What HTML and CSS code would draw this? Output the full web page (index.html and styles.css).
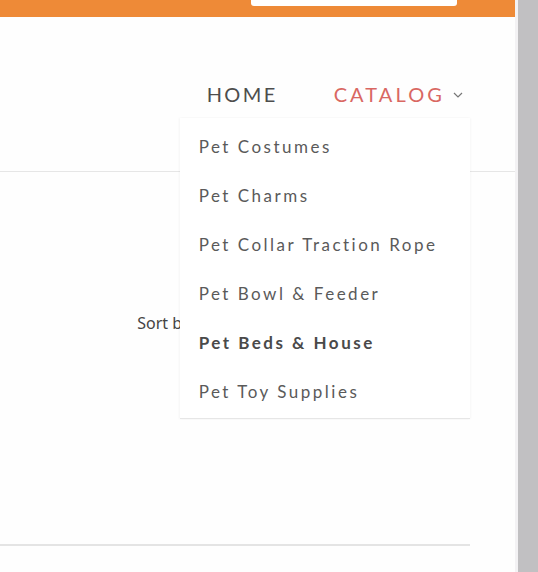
FILE: index.html
```html
<!DOCTYPE html>
<html lang="en">
<head>
  <meta charset="UTF-8" />
  <meta name="viewport" content="width=device-width, initial-scale=1.0"/>
  <title>Pet Shop</title>
  <link rel="stylesheet" href="styles.css">
</head>
<body>

  <div class="window">
    <div class="page">
      <div class="topbar">
        <div class="search"></div>
      </div>

      <nav class="nav">
        <a class="nav-link" href="#">HOME</a>
        <div class="nav-item">
          <a class="nav-link active" href="#">CATALOG
            <svg class="chevron" width="10" height="6" viewBox="0 0 10 6"><path d="M1 1 L5 5 L9 1" fill="none" stroke="#777" stroke-width="1.2"/></svg>
          </a>
          <ul class="dropdown">
            <li>Pet Costumes</li>
            <li>Pet Charms</li>
            <li>Pet Collar Traction Rope</li>
            <li>Pet Bowl &amp; Feeder</li>
            <li class="current">Pet Beds &amp; House</li>
            <li>Pet Toy Supplies</li>
          </ul>
        </div>
      </nav>

      <div class="toolbar">
        <span class="sort-label">Sort by</span>
        <div class="sort-select"></div>
      </div>

      <div class="grid-end"></div>
    </div>
    <div class="scrollbar"></div>
  </div>

</body>
</html>
```

FILE: styles.css
```css
* {
  box-sizing: border-box;
}

html, body {
  margin: 0;
  padding: 0;
  height: 100%;
  background: #fff;
  overflow: hidden;
}

.window {
  display: flex;
  height: 572px;
}

.page {
  flex: 1;
  display: flex;
  flex-direction: column;
  border-right: 3px solid #f3f2f4;
  background: #fefefe;
}

.scrollbar {
  width: 20px;
  background: #c1c0c2;
}

.topbar {
  height: 17px;
  background: #ee8a37;
  display: flex;
  justify-content: flex-end;
  padding-right: 58px;
}

.search {
  width: 206px;
  height: 6px;
  background: #fff;
  border-radius: 0 0 3px 3px;
}

.nav {
  display: flex;
  justify-content: flex-end;
  align-items: center;
  gap: 56px;
  padding: 0 52px 0 0;
  margin-top: 66px;
  height: 22px;
  font-family: "Lato", sans-serif;
}

.nav-item {
  position: relative;
}

.nav-link {
  font-size: 20px;
  letter-spacing: 2.4px;
  color: #4d4d4d;
  text-decoration: none;
  display: flex;
  align-items: center;
}

.nav-link.active {
  color: #d96762;
  letter-spacing: 3.1px;
}

.chevron {
  margin-left: 8px;
  margin-top: 2px;
}

.dropdown {
  position: absolute;
  top: 36px;
  left: -154px;
  width: 290px;
  margin: 0;
  padding: 4px 0 2px;
  list-style: none;
  background: #fff;
  border-bottom: 1px solid #e6e6e6;
  box-shadow: -1px 0 2px rgba(0, 0, 0, 0.04), 1px 0 2px rgba(0, 0, 0, 0.03);
  z-index: 5;
}

.dropdown li {
  height: 49px;
  line-height: 49px;
  padding-left: 19px;
  font-size: 17px;
  letter-spacing: 2.5px;
  color: #5a5a5a;
}

.dropdown li.current {
  font-weight: bold;
  color: #4a4a4a;
}

.toolbar {
  margin-top: 66px;
  border-top: 1px solid #e6e6e6;
  display: flex;
  justify-content: flex-end;
  align-items: center;
  padding: 123px 46px 0 0;
  gap: 3px;
}

.sort-label {
  font-family: "Noto Sans", sans-serif;
  font-size: 16px;
  color: #444;
}

.sort-select {
  width: 276px;
  height: 56px;
  border-right: 1px solid #cfcfcf;
}

.grid-end {
  margin-top: 193px;
  width: 470px;
  border-top: 2px solid #e4e4e4;
}
```
